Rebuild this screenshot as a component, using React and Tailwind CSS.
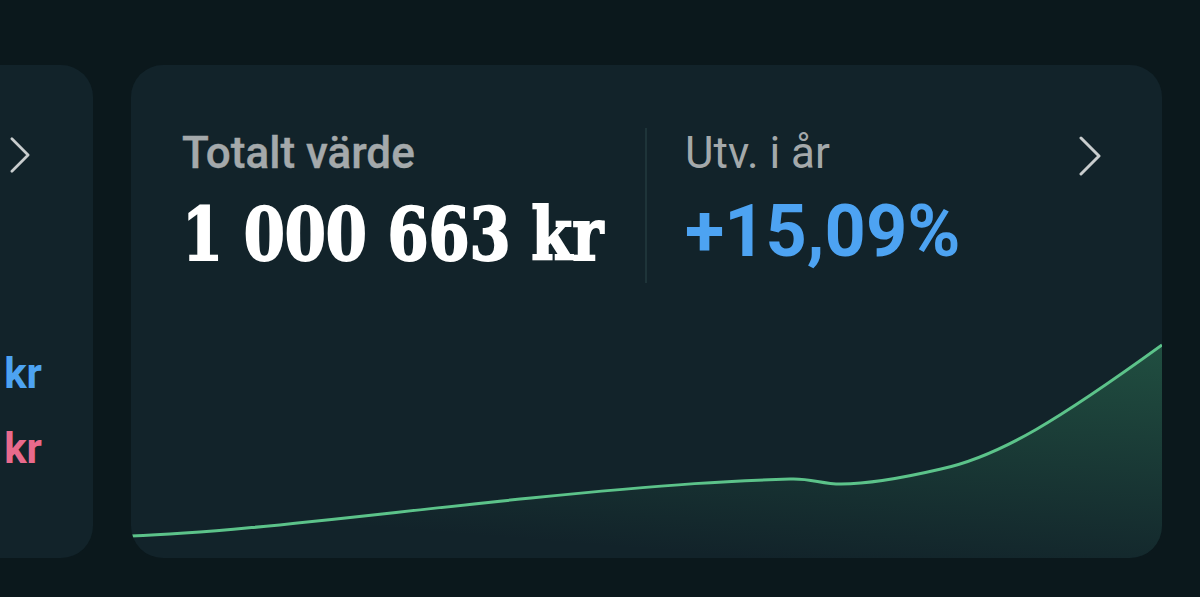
import React from 'react';

const Chevron = ({ className }) => (
  <svg viewBox="0 0 24 40" className={className} fill="none">
    <path d="M3 2 L21 20 L3 38" stroke="#c9cdce" strokeWidth="3" strokeLinecap="round" strokeLinejoin="round" />
  </svg>
);

const SideCard = () => (
  <div className="shrink-0 w-[400px] -ml-[307px] h-[493px] rounded-[32px] bg-[#12232a] flex flex-col items-end pr-[51px] pt-[72px]">
    <Chevron className="w-[24px] h-[36px] mr-[10px]" />
    <div className="mt-[180px] text-[42px] leading-none font-bold text-[#4da3f2]">+45 210 kr</div>
    <div className="mt-[33px] text-[42px] leading-none font-bold text-[#e96a8c]">-3 120 kr</div>
  </div>
);

const Chart = () => (
  <svg viewBox="0 0 1031 220" preserveAspectRatio="none" className="w-full h-[220px] block">
    <defs>
      <linearGradient id="fill" x1="1" y1="0" x2="0.6" y2="1">
        <stop offset="0" stopColor="#2f7a57" stopOpacity="0.5" />
        <stop offset="1" stopColor="#2f7a57" stopOpacity="0" />
      </linearGradient>
    </defs>
    <path
      d="M0 198 C 100 195, 250 175, 400 160 S 600 143, 659 141 C 680 140, 690 146, 710 146 C 740 146, 780 138, 810 131 C 870 118, 930 80, 1031 7 L1031 220 L0 220 Z"
      fill="url(#fill)"
    />
    <path
      d="M0 198 C 100 195, 250 175, 400 160 S 600 143, 659 141 C 680 140, 690 146, 710 146 C 740 146, 780 138, 810 131 C 870 118, 930 80, 1031 7"
      fill="none"
      stroke="#5cc38a"
      strokeWidth="3"
    />
  </svg>
);

const MainCard = () => (
  <div className="shrink-0 w-[1031px] h-[493px] rounded-[32px] bg-[#12232a] overflow-hidden flex flex-col">
    <div className="flex items-start pl-[51px] pr-[60px] pt-[66px]">
      <div className="w-[463px]">
        <div className="text-[44px] leading-none font-medium text-[#a4a9ab] [-webkit-text-stroke:0.4px_#a4a9ab]">Totalt värde</div>
        <div className="mt-[24px] text-[72px] leading-none font-bold text-white font-['DejaVu_Serif',serif] [-webkit-text-stroke:2px_white] scale-x-[0.82] origin-left whitespace-nowrap">
          1 000 663 kr
        </div>
      </div>
      <div className="w-[2px] h-[155px] -mt-[3px] bg-[#1e3439]" />
      <div className="pl-[38px] flex-1">
        <div className="text-[44px] leading-none text-[#a4a9ab]">Utv. i år</div>
        <div className="mt-[21px] text-[72px] leading-none font-bold text-[#4da3f2]">+15,09%</div>
      </div>
      <Chevron className="w-[24px] h-[40px] mt-[5px]" />
    </div>
    <div className="mt-auto">
      <Chart />
    </div>
  </div>
);

export default function App() {
  return (
    <div className="w-[1200px] h-[597px] overflow-hidden bg-[#0b181c] font-['Roboto',sans-serif]">
      <div className="flex gap-[38px] pt-[65px]">
        <SideCard />
        <MainCard />
      </div>
    </div>
  );
}
